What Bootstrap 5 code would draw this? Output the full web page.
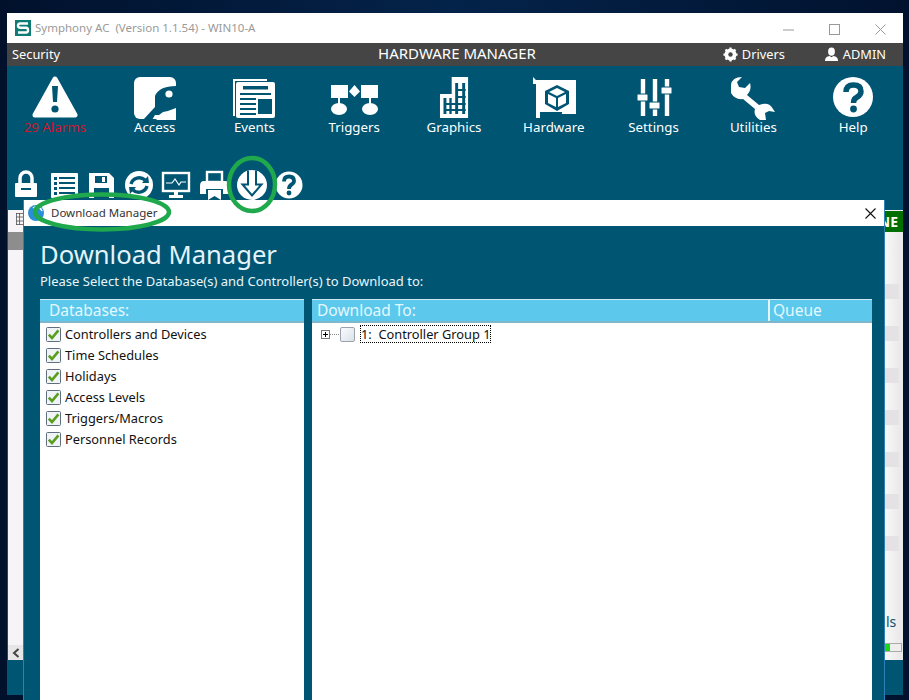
<!DOCTYPE html>
<html lang="en">
<head>
<meta charset="UTF-8" />
<title>Symphony AC</title>
<link href="https://cdn.jsdelivr.net/npm/bootstrap@5.3.0/dist/css/bootstrap.min.css" rel="stylesheet" />
<style>
  html, body { height: 700px; overflow: hidden; }
  body { background: #fff; font-family: "Noto Sans", "Open Sans", sans-serif; }
  .desktop { position: relative; width: 909px; height: 700px; overflow: hidden;
    background: linear-gradient(90deg, #01112c 0, #04234a 50%, #01122e 100%); }
  .main-window { position: absolute; left: 7px; top: 13px; width: 896px; height: 682px; background: #005573; }
  .title-bar { height: 30px; background: #fff; color: #9a9a9a; font-size: 11.5px; padding-left: 8px; }
  .title-bar .win-btn { width: 46px; }
  .menu-bar { height: 23px; background: #454545; color: #fff; font-size: 12.8px; padding: 0 17px 0 5px; position: relative; }
  .menu-bar .center { position: absolute; left: 4px; right: 0; top: 0; text-align: center; font-size: 15px; line-height: 20px; }
  .menu-bar .right-link { width: 101px; }
  .nav-icons { margin-left: -2px; padding-top: 10px; height: 88px; }
  .nav-item-tile { width: 100px; color: #fff; font-size: 13.3px; line-height: 16px; text-align: center; }
  .nav-item-tile svg { display: block; margin: 0 auto -1px; height: 44px; width: 60px; }
  .alarm { color: #d3142a; }
  .tool-row { height: 56px; padding-left: 3px; gap: 5.6px; padding-top: 15px; }
  .tool-row svg { width: 32px; height: 32px; flex: none; }
  .back-pane { height: 450px; margin: 0 18px 0 1px; background: #f6f4f6; position: relative; }
  .badge-ne { position: absolute; right: -18px; top: 1px; width: 50px; height: 21px; background: #006f00; color: #fff; text-align: right;
    padding-right: 5px; font-size: 14px; font-weight: 700; line-height: 21px; overflow: hidden; }
  .strip { position: absolute; right: -18px; top: 0; bottom: 0; width: 18px; background: linear-gradient(90deg, #f8f8f8, #e8e6e8); }
  .strip-cell { position: absolute; right: 4px; width: 14px; height: 15px; background: #e4e2e4; }
  .strip-cell:nth-child(1) { top: 74px; }
  .strip-cell:nth-child(2) { top: 116px; }
  .strip-cell:nth-child(3) { top: 158px; }
  .strip-cell:nth-child(4) { top: 200px; }
  .strip-cell:nth-child(5) { top: 242px; }
  .strip-cell:nth-child(6) { top: 284px; }
  .strip-cell:nth-child(7) { top: 326px; }
  .strip-text { position: absolute; left: 1px; top: 403px; font-size: 14px; color: #0c4f73; line-height: 18px; }
  .strip-meter { position: absolute; left: 0; top: 433px; width: 17px; height: 9px; background: #eee; border: 1px solid #aaa; border-left: 0; }
  .strip-meter i { display: block; width: 5px; height: 100%; background: #18d818; }
  .left-strip { position: absolute; left: 0; top: 0; bottom: 0; width: 15px; background: #f6f4f6; }
  .left-tool { position: absolute; left: 8px; top: 3px; }
  .left-head { position: absolute; left: 0; top: 22px; width: 15px; height: 18px; background: #8d8d8d; }
  .left-arrow { position: absolute; left: 0; bottom: 0; width: 15px; height: 15px; background: #e6e6e6; color: #444; }

  .dialog-window { position: absolute; left: 23px; top: 200px; width: 862px; height: 520px; background: #005573; border: 1px solid #2f80b8; border-top: 0; }
  .dialog-title { height: 26px; background: #fff; color: #333; font-size: 11.5px; padding-left: 27px; }
  .dialog-body { padding: 11px 12px 0 16px; color: #e8f6fb; }
  .dialog-body h1 { font-size: 25.6px; font-weight: 400; line-height: 36px; margin: 0; color: #e4f4fa; }
  .dialog-body p { font-size: 13px; line-height: 17px; margin: 0 0 9px; }
  .db-panel { width: 264px; background: #fff; height: 420px; flex: none; }
  .dl-panel { background: #fff; height: 420px; }
  .panel-head { background: #5bc8ec; color: #e6f8ff; font-size: 15.5px; line-height: 21px; height: 24px;
    border-top: 1px solid #cfe9f2; border-bottom: 2px solid #7fb6ca; padding-left: 9px; }
  .dl-panel .panel-head { padding-left: 5px; }
  .panel-head .queue { width: 104px; border-left: 2px solid #e4f5fb; padding-left: 3px; }
  .db-list { list-style: none; padding: 1px 0 0 6px; margin: 0; color: #111; font-size: 12.8px; line-height: 21px; }
  .db-list li { height: 21px; gap: 4px; }
  .db-list svg { width: 15px; height: 15px; flex: none; }
  .tree-row { padding: 2px 0 0 9px; color: #111; font-size: 12.8px; line-height: 18px; }
  .tree-expander { width: 9px; height: 9px; flex: none; }
  .tree-dots { width: 9px; border-top: 1px dotted #888; }
  .tree-check { width: 15px; height: 15px; flex: none; margin: 0 5px 0 1px; border: 1px solid #9aa3ad; border-radius: 2px;
    background: linear-gradient(135deg, #fafbfc, #dbe2ea); }
  .tree-label { border: 1px dotted #000; height: 18px; line-height: 16px; white-space: pre; }
  .annotation { position: absolute; left: 0; top: 0; pointer-events: none; }
</style>
</head>
<body>
<svg width="0" height="0" class="position-absolute">
  <symbol id="check" viewBox="0 0 15 15">
    <rect x=".5" y=".5" width="14" height="14" rx="1" fill="#f1f4f7" stroke="#5f6f80" />
    <path d="M2.8 7.6 6 11 12.4 3.4" fill="none" stroke="#5a9e1e" stroke-width="2.6" />
  </symbol>
</svg>

<div class="desktop">
  <div class="main-window d-flex flex-column">
    <div class="title-bar d-flex align-items-center flex-none">
      <svg width="16" height="16" viewBox="0 0 16 16" class="me-1">
        <rect width="16" height="16" fill="#0e7c74" />
        <path d="M13 3.5H5Q3 3.5 3 5.5T5 7.8H11Q13 7.8 13 10.2T11 12.5H3" fill="none" stroke="#fff" stroke-width="2.4" />
      </svg>
      <span class="flex-grow-1">Symphony AC&nbsp; (Version 1.1.54) - WIN10-A</span>
      <div class="win-btn text-center"><svg width="11" height="11" viewBox="0 0 11 11"><path d="M0 6H11" stroke="#999" /></svg></div>
      <div class="win-btn text-center"><svg width="11" height="11" viewBox="0 0 11 11"><rect x=".5" y=".5" width="10" height="10" fill="none" stroke="#999" /></svg></div>
      <div class="win-btn text-center"><svg width="11" height="11" viewBox="0 0 11 11"><path d="M.5.5 10.5 10.5M10.5.5.5 10.5" stroke="#999" /></svg></div>
    </div>
    <div class="menu-bar d-flex align-items-center justify-content-between">
      <span>Security</span>
      <div class="center">HARDWARE MANAGER</div>
      <div class="d-flex position-relative">
        <span class="right-link d-flex align-items-center gap-1">
          <svg width="15" height="15" viewBox="0 0 16 16"><circle cx="8" cy="8" r="4.6" fill="none" stroke="#fff" stroke-width="3.6" /><path d="M8 .5V15.5M.5 8H15.5M2.7 2.7 13.3 13.3M13.3 2.7 2.7 13.3" stroke="#fff" stroke-width="2.4" /><circle cx="8" cy="8" r="2.4" fill="#454545" /></svg>
          Drivers
        </span>
        <span class="d-flex align-items-center gap-1">
          <svg width="15" height="15" viewBox="0 0 16 16"><ellipse cx="8" cy="5" rx="3.6" ry="4.4" fill="#fff" /><path d="M1 15Q1 10 6 9.5L8 11 10 9.5Q15 10 15 15Z" fill="#fff" /></svg>
          ADMIN
        </span>
      </div>
    </div>

    <div class="nav-icons d-flex">
      <div class="nav-item-tile">
        <svg viewBox="0 0 60 44"><path d="M30 3 50 39H10Z" fill="#fff" stroke="#fff" stroke-width="5" stroke-linejoin="round" /><path d="M27 10H33L32 26H28Z" fill="#005573" /><circle cx="30" cy="33" r="3.6" fill="#005573" /></svg>
        <div class="alarm">29 Alarms</div>
      </div>
      <div class="nav-item-tile">
        <svg viewBox="0 0 60 44"><rect x="9" y="1" width="42" height="42" rx="6" fill="#fff" /><path d="M18 44 30 31V20Q34 10 51 10V32Q44 35 38 36L34 39H30L27 44Z" fill="#005573" /><circle cx="44" cy="18" r="3.6" fill="#fff" /><path d="M31 44 35 39.500H41L45 37H51V44Z" fill="#fff" /></svg>
        <div>Access</div>
      </div>
      <div class="nav-item-tile">
        <svg viewBox="0 0 60 44"><path d="M9 3H43V5H11V40H9Z" fill="#fff" /><rect x="12" y="6" width="39" height="36" rx="2" fill="#fff" /><rect x="19" y="10" width="25" height="3.5" fill="#005573" /><path d="M16 17H47V19H16ZM16 22H32V24H16ZM16 27H32V29H16ZM16 32H32V34H16ZM16 37H32V39H16Z" fill="#005573" /><rect x="34" y="23" width="14" height="15" fill="#005573" /></svg>
        <div>Events</div>
      </div>
      <div class="nav-item-tile">
        <svg viewBox="0 0 60 44"><rect x="7" y="9" width="17" height="13" fill="#fff" /><rect x="37" y="9" width="17" height="13" fill="#fff" /><path d="M30.500 9 36 15.500 30.500 21 25 15.500Z" fill="#fff" /><path d="M15 20V28M46 20V28" stroke="#fff" stroke-width="2" /><ellipse cx="15" cy="33" rx="8" ry="6" fill="#fff" /><ellipse cx="46" cy="33" rx="8" ry="6" fill="#fff" /></svg>
        <div>Triggers</div>
      </div>
      <div class="nav-item-tile">
        <svg viewBox="0 0 60 44"><g transform="translate(-.4 0) scale(1.17 1)"><path d="M24 1H38V42H14V18H24Z" fill="#fff" /><path d="M27 7H29.500V38H27ZM33 7H35.500V38H33ZM17 22H19.500V38H17ZM22 22H24V38H22ZM27 13H36V15H27ZM27 20H36V22H27ZM17 27H36V29H17ZM17 33H36V35H17Z" fill="#005573" /></g></svg>
        <div>Graphics</div>
      </div>
      <div class="nav-item-tile">
        <svg viewBox="0 0 60 44"><path d="M9 1 12 4H52V38H38V36H16V42H12V8H9Z" fill="#fff" /><path d="M33 9 45 15V28L33 35 21 28V15Z" fill="#005573" /><path d="M33 12 41 16 33 20 25 16ZM24 18 32 22V31L24 27ZM42 18 34 22V31L42 27Z" fill="#fff" /></svg>
        <div>Hardware</div>
      </div>
      <div class="nav-item-tile">
        <svg viewBox="0 0 60 44"><path d="M19 3V40M31 3V40M43 3V40" stroke="#fff" stroke-width="4.4" /><rect x="13" y="18" width="11" height="7" rx="1" fill="#fff" stroke="#005573" /><rect x="25" y="26" width="11" height="7" rx="1" fill="#fff" stroke="#005573" /><rect x="37" y="11" width="11" height="7" rx="1" fill="#fff" stroke="#005573" /></svg>
        <div>Settings</div>
      </div>
      <div class="nav-item-tile">
        <svg viewBox="0 0 60 44"><path d="M8 9Q9 1 19 1L14 6 16 11 22 12 27 7Q29 14 24 19L36 29Q46 25 50 33L52 36 46 35 42 37 43 44H37Q30 40 32 33L20 23Q12 24 8 17Z" fill="#fff" /></svg>
        <div>Utilities</div>
      </div>
      <div class="nav-item-tile">
        <svg viewBox="0 0 60 44"><circle cx="30" cy="21" r="20" fill="#fff" /><path d="M23 16Q23 9 30.500 9 38 9 38 15.500 38 19 33.500 21.500 30.500 23 30.500 27" fill="none" stroke="#005573" stroke-width="5.500" /><circle cx="30.500" cy="33" r="3.400" fill="#005573" /></svg>
        <div>Help</div>
      </div>
    </div>

    <div class="tool-row d-flex align-items-start">
      <svg viewBox="0 0 32 32"><path d="M10 14V9A6 6 0 0 1 22 9V14" fill="none" stroke="#fff" stroke-width="3.500" /><rect x="5" y="14" width="22" height="14" rx="1" fill="#fff" /><rect x="11" y="19" width="10" height="2" fill="#005573" /></svg>
      <svg viewBox="0 0 32 32"><rect x="3" y="4" width="27" height="25" rx="1" fill="#fff" /><path d="M6 8H9V11H6ZM6 13H9V16H6ZM6 18H9V21H6ZM6 23H9V26H6ZM11 8H27V10H11ZM11 13H27V15H11ZM11 18H27V20H11ZM11 23H27V25H11Z" fill="#005573" /></svg>
      <svg viewBox="0 0 32 32"><path d="M4 4H24L29 9V29H4Z" fill="#fff" /><rect x="10" y="7" width="12" height="7" fill="#005573" /><rect x="17" y="8" width="3" height="5" fill="#fff" /><rect x="9" y="19" width="15" height="10" fill="#005573" /></svg>
      <svg viewBox="0 0 32 32"><circle cx="16" cy="16" r="14" fill="#fff" /><path d="M8 15A8.500 8.500 0 0 1 22 11M24 17A8.500 8.500 0 0 1 10 21" fill="none" stroke="#005573" stroke-width="3.400" /><path d="M19 14 26 14 25 7ZM13 18 6 18 7 25Z" fill="#005573" /></svg>
      <svg viewBox="0 0 32 32"><rect x="3" y="4" width="26" height="18" fill="none" stroke="#fff" stroke-width="2.400" /><path d="M6 14H12L15 10 19 16 21 13H26" fill="none" stroke="#fff" stroke-width="1.200" /><path d="M14 22H18V26H23V29H9V26H14Z" fill="#fff" /></svg>
      <svg viewBox="0 0 32 32"><rect x="9" y="3" width="15" height="10" fill="none" stroke="#fff" stroke-width="2.400" /><path d="M2 17Q2 12 6 12H27Q31 12 31 17V25H25V20H8V25H2Z" fill="#fff" /><path d="M10 21H23V31L16.500 27 10 31Z" fill="#fff" /></svg>
      <svg viewBox="0 0 32 32"><circle cx="16" cy="16" r="15" fill="#fff" /><path d="M12 1.500V15.500H6.500L16 26.500 25.500 15.500H20V1.500" fill="none" stroke="#005573" stroke-width="2" /></svg>
      <svg viewBox="0 0 32 32"><circle cx="16" cy="16" r="13.500" fill="#fff" /><path d="M11 12.500Q11 7.500 16 7.500 21 7.500 21 12 21 14 18.500 15.500 16 17 16 20" fill="none" stroke="#005573" stroke-width="3.800" /><circle cx="16" cy="24" r="2.400" fill="#005573" /></svg>
    </div>

    <div class="back-pane">
      <div class="left-strip">
        <svg class="left-tool" width="7" height="12" viewBox="0 0 7 12"><path d="M0 .5H7M.5 0V12M0 4H7M0 8H7M0 11.500H7M3.500 0V12" stroke="#555" stroke-width=".8" fill="none" /></svg>
        <div class="left-head"></div>
        <div class="left-arrow d-flex align-items-center justify-content-center">
          <svg width="8" height="10" viewBox="0 0 8 10"><path d="M6.500 1 2 5 6.500 9" fill="none" stroke="#444" stroke-width="2" /></svg>
        </div>
      </div>
      <div class="strip">
        <div class="strip-cell"></div>
        <div class="strip-cell"></div>
        <div class="strip-cell"></div>
        <div class="strip-cell"></div>
        <div class="strip-cell"></div>
        <div class="strip-cell"></div>
        <div class="strip-cell"></div>
        <div class="strip-text">ls</div>
        <div class="strip-meter"><i></i></div>
      </div>
      <div class="badge-ne">NE</div>
    </div>
  </div>

  <div class="dialog-window">
    <div class="dialog-title d-flex align-items-center justify-content-between">
      <span>Download Manager</span>
      <svg class="me-2" width="11" height="11" viewBox="0 0 11 11"><path d="M.5.5 10.500 10.500M10.500.5.5 10.500" stroke="#111" stroke-width="1.100" /></svg>
    </div>
    <div class="dialog-body">
      <h1>Download Manager</h1>
      <p>Please Select the Database(s) and Controller(s) to Download to:</p>
      <div class="d-flex gap-2">
        <div class="db-panel">
          <div class="panel-head">Databases:</div>
          <ul class="db-list">
            <li class="d-flex align-items-center"><svg><use href="#check" /></svg>Controllers and Devices</li>
            <li class="d-flex align-items-center"><svg><use href="#check" /></svg>Time Schedules</li>
            <li class="d-flex align-items-center"><svg><use href="#check" /></svg>Holidays</li>
            <li class="d-flex align-items-center"><svg><use href="#check" /></svg>Access Levels</li>
            <li class="d-flex align-items-center"><svg><use href="#check" /></svg>Triggers/Macros</li>
            <li class="d-flex align-items-center"><svg><use href="#check" /></svg>Personnel Records</li>
          </ul>
        </div>
        <div class="dl-panel flex-grow-1">
          <div class="panel-head d-flex pe-0">
            <span class="flex-grow-1">Download To:</span>
            <span class="queue">Queue</span>
          </div>
          <div class="tree-row d-flex align-items-center">
            <svg class="tree-expander" viewBox="0 0 9 9"><rect x=".5" y=".5" width="8" height="8" fill="#fff" stroke="#777" /><path d="M2 4.500H7M4.500 2V7" stroke="#000" /></svg>
            <span class="tree-dots"></span>
            <span class="tree-check"></span>
            <span class="tree-label">1:  Controller Group 1</span>
          </div>
        </div>
      </div>
    </div>
  </div>

  <svg class="annotation" width="909" height="700" viewBox="0 0 909 700">
    <circle cx="36" cy="213" r="8" fill="#2a8fd8" />
    <path d="M33 208A6 6 0 0 1 42 211" fill="none" stroke="#fff" stroke-width="1.500" />
    <ellipse cx="102" cy="212" rx="67" ry="17.500" fill="none" stroke="#1fa84c" stroke-width="4.500" />
    <ellipse cx="252" cy="184.500" rx="23" ry="26.500" fill="none" stroke="#1fa84c" stroke-width="4.500" />
  </svg>
</div>

<script src="https://cdn.jsdelivr.net/npm/bootstrap@5.3.0/dist/js/bootstrap.bundle.min.js"></script>
</body>
</html>
